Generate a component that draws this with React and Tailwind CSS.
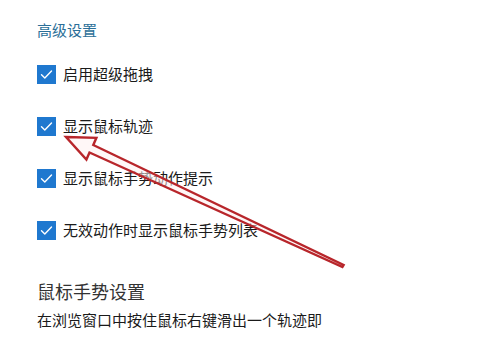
import React from "react";

function Box() {
  return (
    <div className="w-[19px] h-[19px] bg-[#1f78cf] flex items-center justify-center shrink-0">
      <svg width="13" height="13" viewBox="0 0 13 13" fill="none">
        <path d="M1.5 6.8 L4.8 10 L11.5 3" stroke="#fff" strokeWidth="1.4" strokeLinecap="round" strokeLinejoin="round" />
      </svg>
    </div>
  );
}

function Row({ label }) {
  return (
    <div className="h-[52px] flex items-center gap-[7px]">
      <Box />
      <span className="text-[15px] leading-[20px] text-[#1a1a1a]">{label}</span>
    </div>
  );
}

export default function App() {
  return (
    <div
      className="relative w-[486px] h-[343px] bg-white overflow-hidden"
      style={{ fontFamily: '"Noto Sans CJK SC", "Noto Sans", sans-serif' }}
    >
      <div className="flex flex-col pl-[37px] pt-[20px]">
        <div className="h-[20px] text-[15px] leading-[20px] text-[#2b6f98]">高级设置</div>
        <div className="mt-[8px] flex flex-col">
          <Row label="启用超级拖拽" />
          <Row label="显示鼠标轨迹" />
          <Row label="显示鼠标手势动作提示" />
          <Row label="无效动作时显示鼠标手势列表" />
        </div>
        <div className="mt-[22px] text-[18px] leading-[26px] text-[#333]">鼠标手势设置</div>
        <div className="mt-[6px] text-[15px] leading-[20px] text-[#1a1a1a]">在浏览窗口中按住鼠标右键滑出一个轨迹即</div>
      </div>
      <svg className="absolute inset-0 pointer-events-none" width="486" height="343" viewBox="0 0 486 343">
        <polygon
          points="66,137 96.4,137.8 93.3,145 343.6,265 342.4,267 89.5,152.5 86.4,159.6"
          fill="rgba(255,240,240,0.55)"
          stroke="#b8262b"
          strokeWidth="2.4"
          strokeLinejoin="miter"
        />
      </svg>
    </div>
  );
}
